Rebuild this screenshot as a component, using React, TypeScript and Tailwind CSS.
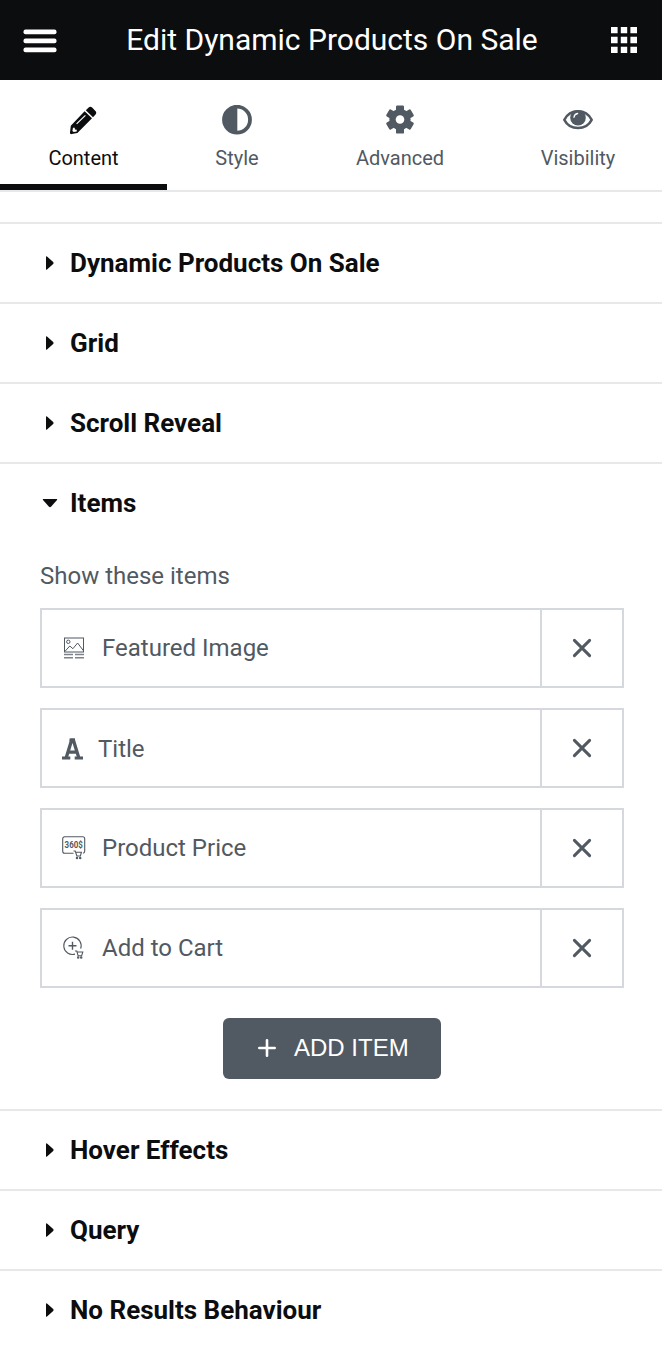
import type { ReactNode } from "react";

const MenuIcon = () => (
  <svg width="34" height="24" viewBox="0 0 34 24" fill="currentColor">
    <rect x="0.5" y="0.5" width="33" height="4.7" rx="2" />
    <rect x="0.5" y="9.5" width="33" height="4.7" rx="2" />
    <rect x="0.5" y="18.5" width="33" height="4.7" rx="2" />
  </svg>
);

const AppsIcon = () => (
  <svg width="26" height="26" viewBox="0 0 26 26" fill="currentColor">
    <path d="M0 0h6.6v6.3H0zM9.8 0h6.4v6.3H9.8zM19.4 0H26v6.3h-6.6zM0 9.8h6.6v6.4H0zM9.8 9.8h6.4v6.4H9.8zM19.4 9.8H26v6.4h-6.6zM0 19.7h6.6V26H0zM9.8 19.7h6.4V26H9.8zM19.4 19.7H26V26h-6.6z" />
  </svg>
);

const PencilIcon = () => (
  <svg width="30" height="30" viewBox="0 0 30 30" fill="currentColor">
    <g transform="translate(-0.8 0.3)">
      <path d="M20.2 2.5c1.200-1.200 2.600-1.200 3.700-.2l3.300 3.300c1.100 1.100 1.100 2.500.1 3.600l-2.500 2.700-7.200-6.900z" />
      <path
        fillRule="evenodd"
        d="M16.400 5.900l7.400 7.100L9.200 27.600 3.500 28.800c-1.100.2-1.900-.5-1.700-1.600l.8-6.700zM16.800 9.700L8 18.200l.8.800L17.600 10.500zM4.800 22.500L4.200 25.600l1.300 1.200 3-.6.1-1.700-1.900-.2-.2-1.800z"
      />
    </g>
  </svg>
);

const StyleIcon = () => (
  <svg width="30" height="30" viewBox="0 0 30 30">
    <circle cx="15" cy="14.700" r="13" fill="none" stroke="currentColor" strokeWidth="3.800" />
    <path d="M15.300 1.700v26A13 13 0 0 1 15.300 1.700z" fill="currentColor" />
  </svg>
);

const GearIcon = () => (
  <svg width="30" height="30" viewBox="0 0 30 30" fill="currentColor">
    <g transform="translate(0 -0.500)">
      <circle cx="15" cy="15" r="10.600" />
      <rect x="11" y="0.900" width="8" height="28.200" rx="1.200" />
      <rect x="11" y="0.900" width="8" height="28.200" rx="1.200" transform="rotate(60 15 15)" />
      <rect x="11" y="0.900" width="8" height="28.200" rx="1.200" transform="rotate(120 15 15)" />
      <circle cx="15" cy="15" r="4.300" fill="#fff" />
    </g>
  </svg>
);

const EyeIcon = () => (
  <svg width="30" height="30" viewBox="0 0 30 30">
    <path
      d="M1.300 14.800C4.500 8.700 9.500 6.300 15 6.300S25.500 8.700 28.700 14.800c-3.200 6.100-8.200 8.200-13.700 8.200S4.500 20.900 1.300 14.800z"
      fill="none"
      stroke="currentColor"
      strokeWidth="2.500"
      strokeLinejoin="round"
    />
    <circle cx="15" cy="12.700" r="7.800" fill="currentColor" />
    <path d="M11 12.300q.3-3.300 3.600-3.800" fill="none" stroke="#fff" strokeWidth="1.300" strokeLinecap="round" />
  </svg>
);

const ImageIcon = () => (
  <svg width="24" height="24" viewBox="0 0 24 24" fill="none" stroke="currentColor" strokeWidth="1">
    <rect x="2.500" y="2" width="19" height="14" />
    <circle cx="6.300" cy="5.800" r="1.700" />
    <path d="M3 15.300L7.800 10l3.100 2.700L15.600 7l5.900 7.800" />
    <path d="M2 18.600h9M13 18.600h9M2 21.800h9M13 21.800h9" strokeWidth="1.500" opacity="0.75" />
  </svg>
);

const LetterIcon = () => (
  <svg width="21" height="22" viewBox="0 0 21 22" fill="none" stroke="currentColor">
    <path d="M4.300 19.500L9.600 2.200h1.800L16.700 19.500M6.200 14.200h8.600" strokeWidth="3.300" />
    <path d="M7.500 1.900h5.500M0 20h8.300M12.700 20H21" strokeWidth="2.800" />
  </svg>
);

const PriceIcon = () => (
  <svg width="24" height="24" viewBox="0 0 24 24" fill="none" stroke="currentColor" strokeWidth="1.100">
    <path d="M11.500 17.300H2.700A2 2 0 0 1 .7 15.300V2.700a2 2 0 0 1 2-2h18a2 2 0 0 1 2 2v12.600a2 2 0 0 1-1.800 2" />
    <text
      x="2.600"
      y="12"
      fill="currentColor"
      stroke="none"
      fontSize="9"
      fontWeight="700"
      fontFamily="Roboto, sans-serif"
      textLength="18.200"
      lengthAdjust="spacingAndGlyphs"
    >
      360$
    </text>
    <path d="M11.500 15h1.700l1.700 5h3.500l1-3.800h-5.500" />
    <circle cx="15" cy="21.900" r="0.700" />
    <circle cx="18.200" cy="21.900" r="0.700" />
  </svg>
);

const CartIcon = () => (
  <svg width="24" height="24" viewBox="0 0 24 24" fill="none" stroke="currentColor" strokeWidth="1.100">
    <path d="M13 18.100a8.700 8.700 0 1 1 5.700-5.500" />
    <path d="M10.500 5.800v8M6.500 9.800h8" strokeWidth="1.400" />
    <path d="M13 15h1.800l1.300 4.800h3.500l1.200-3.800h-5.600" />
    <circle cx="16.200" cy="21.600" r="0.700" />
    <circle cx="19.200" cy="21.600" r="0.700" />
  </svg>
);

const CloseIcon = () => (
  <svg width="20" height="20" viewBox="0 0 20 20" stroke="currentColor" strokeWidth="3" strokeLinecap="round">
    <path d="M2.400 2.400l15.200 15.200M17.600 2.400L2.400 17.600" />
  </svg>
);

const tabs = [
  { label: "Content", icon: <PencilIcon />, style: "w-[167px] border-b-[6px] border-[#0c0d0e]" },
  { label: "Style", icon: <StyleIcon />, style: "w-[140px] text-[#515962]" },
  { label: "Advanced", icon: <GearIcon />, style: "w-[186px] text-[#515962]" },
  { label: "Visibility", icon: <EyeIcon />, style: "grow pl-px text-[#515962]" },
];

const items = [
  { label: "Featured Image", icon: <ImageIcon />, style: "gap-4" },
  { label: "Title", icon: <LetterIcon />, style: "gap-[15px] pt-px" },
  { label: "Product Price", icon: <PriceIcon />, style: "gap-4" },
  { label: "Add to Cart", icon: <CartIcon />, style: "gap-4" },
];

const Section = ({ title, open, children }: { title: string; open?: boolean; children?: ReactNode }) => (
  <section className="border-t-2 border-[#e6e8ea]">
    <button className="flex h-[78px] w-full items-center pl-[42px] text-left">
      <svg width="16" height="16" viewBox="0 0 16 16" fill="currentColor">
        {open ? (
          <path d="M1.200 4h13.600q.8.300.2 1L9 11.700q-1 .9-2 0L1 5q-.6-.7.2-1z" />
        ) : (
          <path d="M4 1.800q.2-1 1-.3l6.200 5.600q.9.900 0 1.800L5 14.500q-.8.700-1-.3z" />
        )}
      </svg>
      <span className="ml-3 text-[26px] leading-none font-bold">{title}</span>
    </button>
    {children}
  </section>
);

const App = () => {
  return (
    <div className="h-[1350px] w-full overflow-hidden bg-white font-[Roboto,sans-serif] text-[#0c0d0e]">
      <header className="flex h-20 items-center bg-[#0c0d0e] pr-[25px] pl-[23px] text-white">
        <div className="pt-[2px]">
          <MenuIcon />
        </div>
        <h1 className="grow pr-1 text-center text-[30px] leading-none">Edit Dynamic Products On Sale</h1>
        <AppsIcon />
      </header>

      <nav className="flex h-28 border-b-2 border-[#e6e8ea]">
        {tabs.map((tab) => (
          <button key={tab.label} className={`flex flex-col items-center pt-[25px] ${tab.style}`}>
            {tab.icon}
            <span className="mt-[11px] text-[20px] leading-6">{tab.label}</span>
          </button>
        ))}
      </nav>

      <main className="pt-[30px]">
        <Section title="Dynamic Products On Sale" />
        <Section title="Grid" />
        <Section title="Scroll Reveal" />
        <Section title="Items" open>
          <div className="px-10 pt-5 pb-[30px] text-[#515962]">
            <p className="mb-[18px] text-[24px] leading-7">Show these items</p>
            <ul className="flex w-[584px] flex-col gap-5">
              {items.map((item) => (
                <li key={item.label} className="flex h-20 border-2 border-[#d5d8dc]">
                  <div className={`flex grow items-center pl-5 ${item.style}`}>
                    {item.icon}
                    <span className="text-[24px] leading-7">{item.label}</span>
                  </div>
                  <button className="flex w-[82px] items-center justify-center border-l-2 border-[#d5d8dc]">
                    <CloseIcon />
                  </button>
                </li>
              ))}
            </ul>
            <div className="mt-[30px] flex w-[584px] justify-center">
              <button className="flex h-[61px] w-[218px] items-center rounded-md bg-[#515962] pb-[2px] pl-[35px] text-white">
                <svg width="18" height="18" viewBox="0 0 18 18" stroke="currentColor" strokeWidth="2.600" strokeLinecap="round">
                  <path d="M9 1.300v15.400M1.300 9h15.400" />
                </svg>
                <span className="ml-[18px] font-['Liberation_Sans',Arial,sans-serif] text-[24px] leading-none">ADD ITEM</span>
              </button>
            </div>
          </div>
        </Section>
        <Section title="Hover Effects" />
        <Section title="Query" />
        <Section title="No Results Behaviour" />
      </main>
    </div>
  );
};

export default App;
